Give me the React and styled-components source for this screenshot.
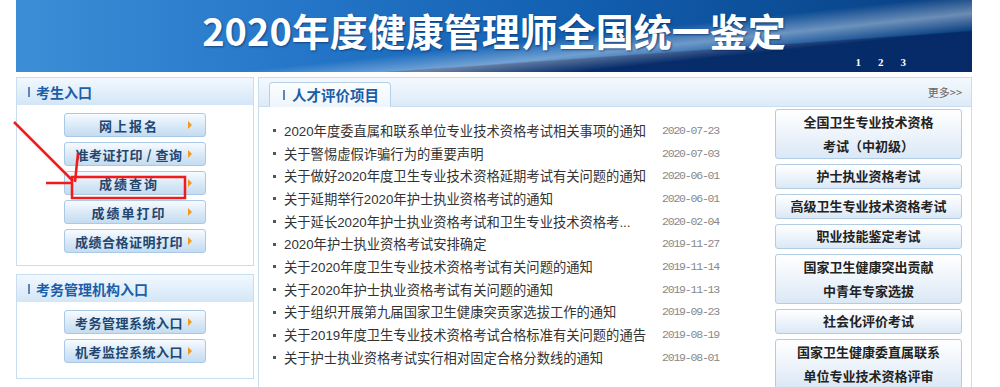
import styled, { createGlobalStyle } from "styled-components";

const GlobalStyle = createGlobalStyle`
  html, body {
    margin: 0;
    padding: 0;
    background: #fff;
    font-family: "Liberation Sans", "Noto Sans CJK SC", sans-serif;
  }
`;

const Page = styled.div`
  position: relative;
  width: 1000px;
  height: 387px;
  overflow: hidden;
  padding-left: 16px;
  box-sizing: border-box;
`;

const Banner = styled.div`
  position: relative;
  width: 956px;
  height: 72px;
  display: flex;
  align-items: center;
  justify-content: center;
  background:
    linear-gradient(174deg, rgba(255, 255, 255, 0) 55%, rgba(255, 255, 255, 0.4) 66%, rgba(255, 255, 255, 0) 76%),
    linear-gradient(176deg, rgba(0, 0, 0, 0) 70%, rgba(5, 40, 100, 0.9) 71%),
    linear-gradient(90deg, #3c8ed6 0%, #2576c8 30%, #1462b4 55%, #0c4e98 80%, #0a3f80 100%);
  overflow: hidden;
`;

const BannerTitle = styled.h1`
  margin: 0 0 14px 0;
  font-family: "Noto Sans CJK SC", sans-serif;
  font-size: 38px;
  font-weight: 700;
  color: #fff;
  text-shadow: 1px 1px 2px rgba(0, 30, 80, 0.6);
`;

const Pager = styled.div`
  position: absolute;
  right: 66px;
  bottom: 4px;
  display: flex;
  gap: 17px;
  font-family: "Liberation Serif", serif;
  font-size: 11px;
  font-weight: 700;
  color: #fff;
`;

const Main = styled.div`
  display: grid;
  grid-template-columns: 238px 714px;
  gap: 4px;
  margin-top: 5px;
`;

const LeftCol = styled.div`
  display: flex;
  flex-direction: column;
  gap: 8px;
`;

const SidePanel = styled.div`
  border: 1px solid #c9ddf1;
  height: ${(p) => p.$h}px;
  box-sizing: border-box;
`;

const PanelHead = styled.div`
  height: 27px;
  display: flex;
  align-items: center;
  padding-left: 11px;
  gap: 6px;
  background: linear-gradient(#f2f8fe, #d3e6f7);
  font-family: "Noto Sans CJK SC", sans-serif;
  font-size: 14px;
  font-weight: 700;
  color: #1b5ea8;
`;

const Bar = styled.span`
  width: 2px;
  height: 10px;
  background: #5b86b5;
`;

const ButtonList = styled.div`
  display: flex;
  flex-direction: column;
  align-items: center;
  gap: 5px;
  padding-top: 8px;
`;

const EntryButton = styled.a`
  position: relative;
  width: 142px;
  height: 24px;
  box-sizing: border-box;
  display: flex;
  align-items: center;
  justify-content: center;
  padding-right: 12px;
  border: 1px solid #a9c9e6;
  border-radius: 3px;
  background: linear-gradient(#f7fbff, #d6e7f6 60%, #c4dcf1);
  font-family: "Noto Sans CJK SC", sans-serif;
  font-size: 13px;
  font-weight: 700;
  letter-spacing: ${(p) => p.$ls || 1}px;
  color: #23466f;
  white-space: nowrap;

  &::after {
    content: "";
    position: absolute;
    right: 13px;
    top: 7px;
    border-left: 4px solid #f39a1c;
    border-top: 4px solid transparent;
    border-bottom: 4px solid transparent;
  }
`;

const CenterPanel = styled.div`
  border: 1px solid #c9ddf1;
  border-bottom: none;
  height: 320px;
  box-sizing: border-box;
`;

const TabBar = styled.div`
  height: 28px;
  display: flex;
  align-items: flex-end;
  justify-content: space-between;
  padding: 0 9px 0 10px;
  background: linear-gradient(#f4f9fe, #dcebf8);
  border-bottom: 1px solid #c9ddf1;
`;

const Tab = styled.div`
  width: 122px;
  height: 25px;
  box-sizing: border-box;
  margin-bottom: -1px;
  display: flex;
  align-items: center;
  gap: 7px;
  padding-left: 13px;
  background: linear-gradient(#fcfeff, #eef5fc);
  border: 1px solid #b6d0ea;
  border-bottom-color: #eef5fc;
  border-radius: 4px 4px 0 0;
  font-family: "Noto Sans CJK SC", sans-serif;
  font-size: 14.5px;
  font-weight: 700;
  color: #1b5ea8;
`;

const More = styled.span`
  align-self: center;
  font-family: "Noto Sans CJK SC", sans-serif;
  font-size: 11px;
  color: #666;
`;

const Body = styled.div`
  display: flex;
  justify-content: space-between;
  padding: 2px 9px 0 14px;
`;

const NewsList = styled.ul`
  list-style: none;
  margin: 0;
  padding: 10px 0 0 0;
  width: 446px;
`;

const NewsItem = styled.li`
  height: 22.7px;
  display: flex;
  align-items: center;
  justify-content: space-between;
`;

const NewsTitle = styled.span`
  position: relative;
  padding-left: 11px;
  font-size: 13.3px;
  color: #333;
  white-space: nowrap;

  &::before {
    content: "";
    position: absolute;
    left: 0;
    top: 50%;
    width: 3px;
    height: 3px;
    margin-top: -1px;
    background: #555;
  }
`;

const NewsDate = styled.span`
  font-family: "Liberation Mono", monospace;
  font-size: 11.5px;
  letter-spacing: -1.2px;
  color: #888;
`;

const ProjectCol = styled.div`
  display: flex;
  flex-direction: column;
  gap: 5.4px;
  width: 187px;
`;

const ProjectButton = styled.a`
  height: ${(p) => (p.$tall ? 49.5 : 24.7)}px;
  box-sizing: border-box;
  display: flex;
  flex-direction: column;
  align-items: center;
  justify-content: center;
  border: 1px solid #b3cce5;
  border-radius: 3px;
  background: linear-gradient(#ffffff, #eef4fb 50%, #dae8f5);
  font-family: "Noto Sans CJK SC", sans-serif;
  font-size: 13px;
  font-weight: 700;
  line-height: 24px;
  color: #222;
`;

const Marks = styled.svg`
  position: absolute;
  left: 0;
  top: 0;
  pointer-events: none;
`;

const news = [
  ["2020年度委直属和联系单位专业技术资格考试相关事项的通知", "2020-07-23"],
  ["关于警惕虚假诈骗行为的重要声明", "2020-07-03"],
  ["关于做好2020年度卫生专业技术资格延期考试有关问题的通知", "2020-06-01"],
  ["关于延期举行2020年护士执业资格考试的通知", "2020-06-01"],
  ["关于延长2020年护士执业资格考试和卫生专业技术资格考...", "2020-02-04"],
  ["2020年护士执业资格考试安排确定", "2019-11-27"],
  ["关于2020年度卫生专业技术资格考试有关问题的通知", "2019-11-14"],
  ["关于2020年护士执业资格考试有关问题的通知", "2019-11-13"],
  ["关于组织开展第九届国家卫生健康突贡家选拔工作的通知", "2019-09-23"],
  ["关于2019年度卫生专业技术资格考试合格标准有关问题的通告", "2019-08-19"],
  ["关于护士执业资格考试实行相对固定合格分数线的通知", "2019-08-01"],
];

const projects = [
  ["全国卫生专业技术资格", "考试（中初级）"],
  ["护士执业资格考试"],
  ["高级卫生专业技术资格考试"],
  ["职业技能鉴定考试"],
  ["国家卫生健康突出贡献", "中青年专家选拔"],
  ["社会化评价考试"],
  ["国家卫生健康委直属联系", "单位专业技术资格评审"],
];

export default function App() {
  return (
    <>
      <GlobalStyle />
      <Page>
        <Banner>
          <BannerTitle>2020年度健康管理师全国统一鉴定</BannerTitle>
          <Pager>
            <span>1</span>
            <span>2</span>
            <span>3</span>
          </Pager>
        </Banner>
        <Main>
          <LeftCol>
            <SidePanel $h={189}>
              <PanelHead>
                <Bar />
                考生入口
              </PanelHead>
              <ButtonList>
                <EntryButton $ls={2}>网上报名</EntryButton>
                <EntryButton $ls={0.5}>准考证打印 / 查询</EntryButton>
                <EntryButton $ls={2}>成绩查询</EntryButton>
                <EntryButton $ls={2}>成绩单打印</EntryButton>
                <EntryButton $ls={0.5}>成绩合格证明打印</EntryButton>
              </ButtonList>
            </SidePanel>
            <SidePanel $h={105}>
              <PanelHead>
                <Bar />
                考务管理机构入口
              </PanelHead>
              <ButtonList>
                <EntryButton $ls={0.5}>考务管理系统入口</EntryButton>
                <EntryButton $ls={0.5}>机考监控系统入口</EntryButton>
              </ButtonList>
            </SidePanel>
          </LeftCol>
          <CenterPanel>
            <TabBar>
              <Tab>
                <Bar />
                人才评价项目
              </Tab>
              <More>更多&gt;&gt;</More>
            </TabBar>
            <Body>
              <NewsList>
                {news.map(([title, date]) => (
                  <NewsItem key={title}>
                    <NewsTitle>{title}</NewsTitle>
                    <NewsDate>{date}</NewsDate>
                  </NewsItem>
                ))}
              </NewsList>
              <ProjectCol>
                {projects.map((lines) => (
                  <ProjectButton key={lines[0]} $tall={lines.length > 1}>
                    {lines.map((l) => (
                      <span key={l}>{l}</span>
                    ))}
                  </ProjectButton>
                ))}
              </ProjectCol>
            </Body>
          </CenterPanel>
        </Main>
        <Marks width="1000" height="387" viewBox="0 0 1000 387">
          <g stroke="#f21b1b" strokeWidth="2.5" fill="none">
            <line x1="14" y1="122" x2="73" y2="181" />
            <line x1="78" y1="153" x2="75" y2="182" />
            <line x1="46" y1="183" x2="73" y2="183" />
            <rect x="72" y="177" width="113" height="21" />
          </g>
        </Marks>
      </Page>
    </>
  );
}
